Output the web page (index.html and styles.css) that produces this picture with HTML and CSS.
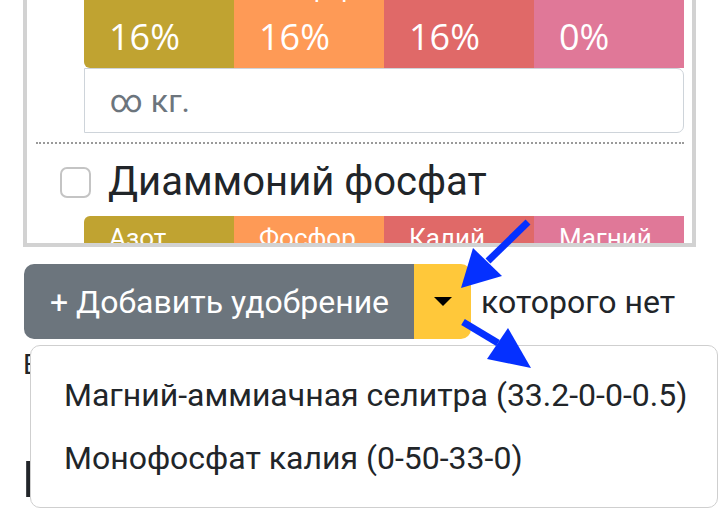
FILE: index.html
```html
<!DOCTYPE html>
<html lang="ru">
<head>
  <meta charset="UTF-8" />
  <title>Калькулятор удобрений</title>
  <link rel="stylesheet" href="styles.css">
</head>
<body>
  <div class="page">
    <div class="panel">
      <div class="list">
        <div class="item">
          <label class="item-title"><span class="check"></span>Нитроаммофоска</label>
          <div class="npk">
            <div class="npk-cell n"><span class="npk-name">Азот</span><span class="npk-val">16%</span></div>
            <div class="npk-cell p"><span class="npk-name">Фосфор</span><span class="npk-val">16%</span></div>
            <div class="npk-cell k"><span class="npk-name">Калий</span><span class="npk-val">16%</span></div>
            <div class="npk-cell mg"><span class="npk-name">Магний</span><span class="npk-val">0%</span></div>
          </div>
          <div class="amount">∞ кг.</div>
        </div>
        <div class="item">
          <label class="item-title"><span class="check"></span>Диаммоний фосфат</label>
          <div class="npk">
            <div class="npk-cell n"><span class="npk-name">Азот</span><span class="npk-val">18%</span></div>
            <div class="npk-cell p"><span class="npk-name">Фосфор</span><span class="npk-val">46%</span></div>
            <div class="npk-cell k"><span class="npk-name">Калий</span><span class="npk-val">0%</span></div>
            <div class="npk-cell mg"><span class="npk-name">Магний</span><span class="npk-val">0%</span></div>
          </div>
          <div class="amount">∞ кг.</div>
        </div>
      </div>
    </div>

    <div class="actions">
      <div class="btn-group">
        <button class="btn-add">+ Добавить удобрение</button>
        <button class="btn-toggle"><span class="caret"></span></button>
        <div class="dropdown-menu">
          <div class="dropdown-item">Магний-аммиачная селитра (33.2-0-0-0.5)</div>
          <div class="dropdown-item">Монофосфат калия (0-50-33-0)</div>
        </div>
      </div>
      <span class="hint">которого нет</span>
    </div>

    <p class="note">Выберите удобрения из списка</p>
    <h2 class="result-title">Результат</h2>

    <!-- annotation arrows -->
    <svg class="arrows" width="720" height="524" viewBox="0 0 720 524">
      <line x1="528" y1="222" x2="488" y2="261" stroke="#0530ff" stroke-width="7" />
      <polygon points="473,248 502,276 461,288" fill="#0530ff" />
      <line x1="463" y1="322" x2="498" y2="343" stroke="#0530ff" stroke-width="7" />
      <polygon points="508,328 487,359 531,368" fill="#0530ff" />
    </svg>
  </div>
</body>
</html>
```

FILE: styles.css
```css
/* ── BASE ───────────────────────────────────────────── */
* { margin: 0; padding: 0; box-sizing: border-box; }
body {
  font-family: Roboto, "Noto Sans", sans-serif;
  background: #fff;
  color: #212529;
  overflow: hidden;
}
.page {
  position: relative;
  width: 720px;
  height: 524px;
  padding-left: 23px;
}

/* ── SCROLLED LIST OF FERTILIZERS ───────────────────── */
.panel {
  width: 673px;
  height: 247px;
  border: 4px solid #d2d2d2;
  border-top: none;                 /* top is scrolled out of view */
  overflow: hidden;
}
.list { margin-top: -106px; }

.item {
  margin: 0 8px 0 9px;
  padding: 14px 0 9px;
  border-bottom: 2px dotted #9a9a9a;
}
.item-title {
  display: flex;
  align-items: center;
  height: 48px;
  font-size: 40px;
  line-height: 48px;
  color: #212529;
}
.check {
  width: 31px;
  height: 31px;
  margin: 0 17px 0 24px;
  border: 2px solid #c4c4c4;
  border-radius: 7px;
  background: #fff;
}

/* NPK bar */
.npk {
  display: flex;
  margin: 10px 0 0 48px;
  border-radius: 6px 0 0 6px;
  overflow: hidden;
}
.npk-cell {
  flex: 1;
  display: flex;
  flex-direction: column;
  padding: 6px 25px;
  color: #fff;
}
.npk-cell.n  { background: #c0a331; }
.npk-cell.p  { background: #fe9a56; }
.npk-cell.k  { background: #e06968; }
.npk-cell.mg { background: #e07898; }
.npk-name {
  font-size: 26px;
  line-height: 32px;
}
.npk-val {
  margin-top: 8px;
  font-family: "Open Sans", sans-serif;
  font-size: 36px;
  line-height: 50px;
}

.amount {
  display: flex;
  align-items: center;
  height: 65px;
  margin-left: 48px;
  padding-left: 25px;
  border: 1px solid #ced4da;
  border-radius: 0 7px 7px 0;
  font-size: 32px;
  color: #6c757d;
}

/* ── ADD BUTTON + DROPDOWN ──────────────────────────── */
.actions {
  display: flex;
  align-items: center;
  margin: 17px 0 0 1px;
}
.btn-group {
  position: relative;
  display: flex;
  height: 75px;
}
.btn-group button {
  border: none;
  font-family: inherit;
  cursor: pointer;
}
.btn-add {
  padding: 0 25px 0 26px;
  background: #6c757d;
  color: #fff;
  font-size: 32px;
  border-radius: 10px 0 0 10px;
}
.btn-toggle {
  display: flex;
  align-items: center;
  justify-content: center;
  width: 57px;
  background: #ffc83a;
  border-radius: 0 10px 10px 0;
}
.caret {
  width: 0;
  height: 0;
  border-top: 9px solid #000;
  border-left: 9px solid transparent;
  border-right: 9px solid transparent;
}
.hint {
  margin-left: 10px;
  font-size: 32px;
}

.dropdown-menu {
  position: absolute;
  top: calc(100% + 6px);
  left: 6px;
  z-index: 2;
  width: 688px;
  padding: 18px 0 17px;
  border: 1.5px solid #cfcfcf;
  border-radius: 10px;
  background: #fff;
}
.dropdown-item {
  padding: 0 33px;
  font-size: 32px;
  line-height: 63px;
  white-space: nowrap;
  color: #212529;
}

/* ── TEXT BEHIND THE MENU ───────────────────────────── */
.note {
  margin-top: 9px;
  font-size: 28px;
  line-height: 34px;
}
.result-title {
  margin-top: 68px;
  font-size: 50px;
  line-height: 60px;
  font-weight: 700;
}

/* ── ANNOTATION ARROWS ──────────────────────────────── */
.arrows {
  position: absolute;
  top: 0;
  left: 0;
  z-index: 3;
  pointer-events: none;
}
```
